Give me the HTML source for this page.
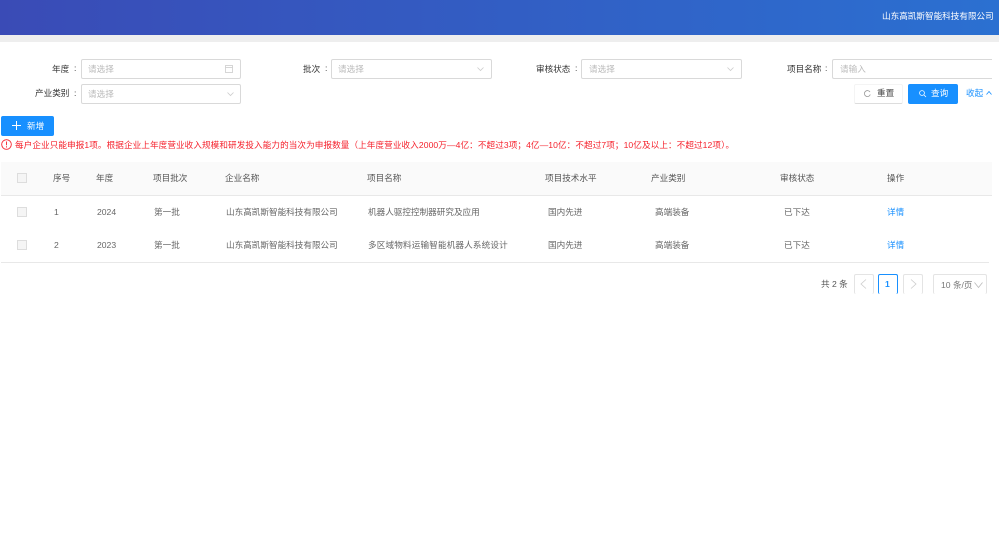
<!DOCTYPE html>
<html lang="zh"><head><meta charset="utf-8"><title>项目列表</title>
<style>
html,body{margin:0;padding:0;width:999px;height:559px;overflow:hidden;background:#fff}
body{font-family:"Liberation Sans","Noto Sans CJK SC",sans-serif;font-size:8.6px;color:#444;position:relative}
#w{position:absolute;left:0;top:0;width:999px;height:559px;filter:blur(.3px)}
.a{position:absolute;white-space:nowrap;line-height:12px}
.box{position:absolute;box-sizing:border-box;border:1px solid #d9d9d9;border-radius:2px;background:#fff}
.ph{color:#bbb}
.l{color:#333}
.th{color:#555;top:172px}
.r1{top:206px;color:#666}
.r2{top:239px;color:#666}
.cb{position:absolute;left:17px;width:10px;height:10px;box-sizing:border-box;border:1px solid #ddd;background:#f5f5f5}
svg{position:absolute;overflow:visible}
</style></head><body><div id="w">
<div class="a" style="left:0;top:0;width:999px;height:35px;background:linear-gradient(90deg,#3a4bb6,#2b70d1)"></div>
<div class="a" style="left:0;top:35px;width:999px;height:7px;background:#eeeeee"></div>
<div class="a" style="left:882px;top:10px;color:#fff">山东高凯斯智能科技有限公司</div>

<div class="a l" style="left:52px;top:63px">年度</div><div class="a l" style="left:74px;top:62px">:</div>
<div class="box" style="left:81px;top:59px;width:160px;height:20px"></div>
<div class="a ph" style="left:88px;top:63px">请选择</div>
<svg style="left:225px;top:65px" width="8" height="8" fill="none" stroke="#ccc" stroke-width=".8"><rect x=".5" y=".5" width="7" height="7"/><path d="M.5 2.500h7"/></svg>

<div class="a l" style="left:303px;top:63px">批次</div><div class="a l" style="left:325px;top:62px">:</div>
<div class="box" style="left:331px;top:59px;width:161px;height:20px"></div>
<div class="a ph" style="left:338px;top:63px">请选择</div>
<svg style="left:477px;top:67px" width="7" height="4" fill="none" stroke="#ccc" stroke-width=".8"><path d="M.5.500l3 3 3-3"/></svg>

<div class="a l" style="left:536px;top:63px">审核状态</div><div class="a l" style="left:575px;top:62px">:</div>
<div class="box" style="left:581px;top:59px;width:161px;height:20px"></div>
<div class="a ph" style="left:589px;top:63px">请选择</div>
<svg style="left:727px;top:67px" width="7" height="4" fill="none" stroke="#ccc" stroke-width=".8"><path d="M.5.500l3 3 3-3"/></svg>

<div class="a l" style="left:787px;top:63px">项目名称</div><div class="a l" style="left:825px;top:62px">:</div>
<div class="box" style="left:832px;top:59px;width:167px;height:20px;border-right:0"></div>
<div class="a" style="left:992px;top:58px;width:7px;height:22px;background:#fff"></div>
<div class="a ph" style="left:840px;top:63px">请输入</div>

<div class="a l" style="left:35px;top:87px">产业类别</div><div class="a l" style="left:74px;top:87px">:</div>
<div class="box" style="left:81px;top:84px;width:160px;height:20px"></div>
<div class="a ph" style="left:88px;top:88px">请选择</div>
<svg style="left:227px;top:92px" width="7" height="4" fill="none" stroke="#ccc" stroke-width=".8"><path d="M.5.500l3 3 3-3"/></svg>

<div class="box" style="left:854px;top:84px;width:49px;height:20px;border-color:#f4f4f4;border-bottom-color:#ddd"></div>
<svg style="left:864px;top:90px" width="7" height="7" fill="none" stroke="#999" stroke-width=".8"><path d="M6 2A3 3 0 1 0 6.300 4.500"/></svg>
<div class="a" style="left:877px;top:87px;color:#444">重置</div>
<div class="a" style="left:908px;top:84px;width:50px;height:20px;background:#1890ff;border-radius:2px"></div>
<svg style="left:919px;top:90px" width="7" height="7" fill="none" stroke="#fff" stroke-width=".8"><circle cx="3" cy="3" r="2.400"/><path d="M5 5l2 2"/></svg>
<div class="a" style="left:931px;top:87px;color:#fff">查询</div>
<div class="a" style="left:966px;top:87px;color:#1890ff">收起</div>
<svg style="left:986px;top:91px" width="6" height="4" fill="none" stroke="#1890ff" stroke-width=".8"><path d="M.5 3.500l2.500-3 2.500 3"/></svg>

<div class="a" style="left:1px;top:116px;width:53px;height:20px;background:#1890ff;border-radius:2px"></div>
<svg style="left:12px;top:121px" width="9" height="9" stroke="#fff"><path d="M4.500 0v9M0 4.500h9"/></svg>
<div class="a" style="left:27px;top:120px;color:#fff">新增</div>

<svg style="left:1px;top:139px" width="11" height="11" fill="none" stroke="#f5222d" stroke-width=".9"><circle cx="5.500" cy="5.500" r="4.800"/><path d="M5.500 2.500v3.800M5.500 7.300v1.200"/></svg>
<div class="a" style="left:15px;top:139px;color:#f5222d;letter-spacing:.08px">每户企业只能申报1项。根据企业上年度营业收入规模和研发投入能力的当次为申报数量（上年度营业收入2000万—4亿：不超过3项；4亿—10亿：不超过7项；10亿及以上：不超过12项）。</div>

<div class="a" style="left:1px;top:162px;width:991px;height:33px;background:#fafafa;border-bottom:1px solid #e8e8e8"></div>
<div class="cb" style="top:173px"></div>
<div class="a th" style="left:53px">序号</div>
<div class="a th" style="left:96px">年度</div>
<div class="a th" style="left:153px">项目批次</div>
<div class="a th" style="left:225px">企业名称</div>
<div class="a th" style="left:367px">项目名称</div>
<div class="a th" style="left:545px">项目技术水平</div>
<div class="a th" style="left:651px">产业类别</div>
<div class="a th" style="left:780px">审核状态</div>
<div class="a th" style="left:887px">操作</div>

<div class="cb" style="top:207px"></div>
<div class="a r1" style="left:54px">1</div>
<div class="a r1" style="left:97px">2024</div>
<div class="a r1" style="left:154px">第一批</div>
<div class="a r1" style="left:226px">山东高凯斯智能科技有限公司</div>
<div class="a r1" style="left:368px">机器人驱控控制器研究及应用</div>
<div class="a r1" style="left:548px">国内先进</div>
<div class="a r1" style="left:655px">高端装备</div>
<div class="a r1" style="left:784px">已下达</div>
<div class="a r1" style="left:887px;color:#1890ff">详情</div>

<div class="cb" style="top:240px"></div>
<div class="a r2" style="left:54px">2</div>
<div class="a r2" style="left:97px">2023</div>
<div class="a r2" style="left:154px">第一批</div>
<div class="a r2" style="left:226px">山东高凯斯智能科技有限公司</div>
<div class="a r2" style="left:368px;letter-spacing:.15px">多区域物料运输智能机器人系统设计</div>
<div class="a r2" style="left:548px">国内先进</div>
<div class="a r2" style="left:655px">高端装备</div>
<div class="a r2" style="left:784px">已下达</div>
<div class="a r2" style="left:887px;color:#1890ff">详情</div>
<div class="a" style="left:1px;top:262px;width:988px;height:1px;background:#e8e8e8"></div>

<div class="a" style="left:821px;top:278px;color:#555">共 2 条</div>
<div class="box" style="left:854px;top:274px;width:20px;height:20px;border-color:#e4e4e4;border-bottom:0"></div>
<svg style="left:860px;top:279px" width="7" height="10" fill="none" stroke="#ccc" stroke-width=".8"><path d="M6 .5L1 5l5 4.500"/></svg>
<div class="box" style="left:878px;top:274px;width:20px;height:20px;border-color:#1890ff;border-bottom:0"></div>
<div class="a" style="left:885px;top:278px;color:#1890ff;font-weight:bold">1</div>
<div class="box" style="left:903px;top:274px;width:20px;height:20px;border-color:#e4e4e4;border-bottom:0"></div>
<svg style="left:910px;top:279px" width="7" height="10" fill="none" stroke="#ccc" stroke-width=".8"><path d="M1 .5L6 5l-5 4.500"/></svg>
<div class="box" style="left:933px;top:274px;width:54px;height:20px;border-color:#e4e4e4;border-bottom:0"></div>
<div class="a" style="left:941px;top:279px;color:#777">10 条/页</div>
<svg style="left:974px;top:282px" width="9" height="6" fill="none" stroke="#bbb" stroke-width=".8"><path d="M.5.500l4 5 4-5"/></svg>
</div></body></html>
